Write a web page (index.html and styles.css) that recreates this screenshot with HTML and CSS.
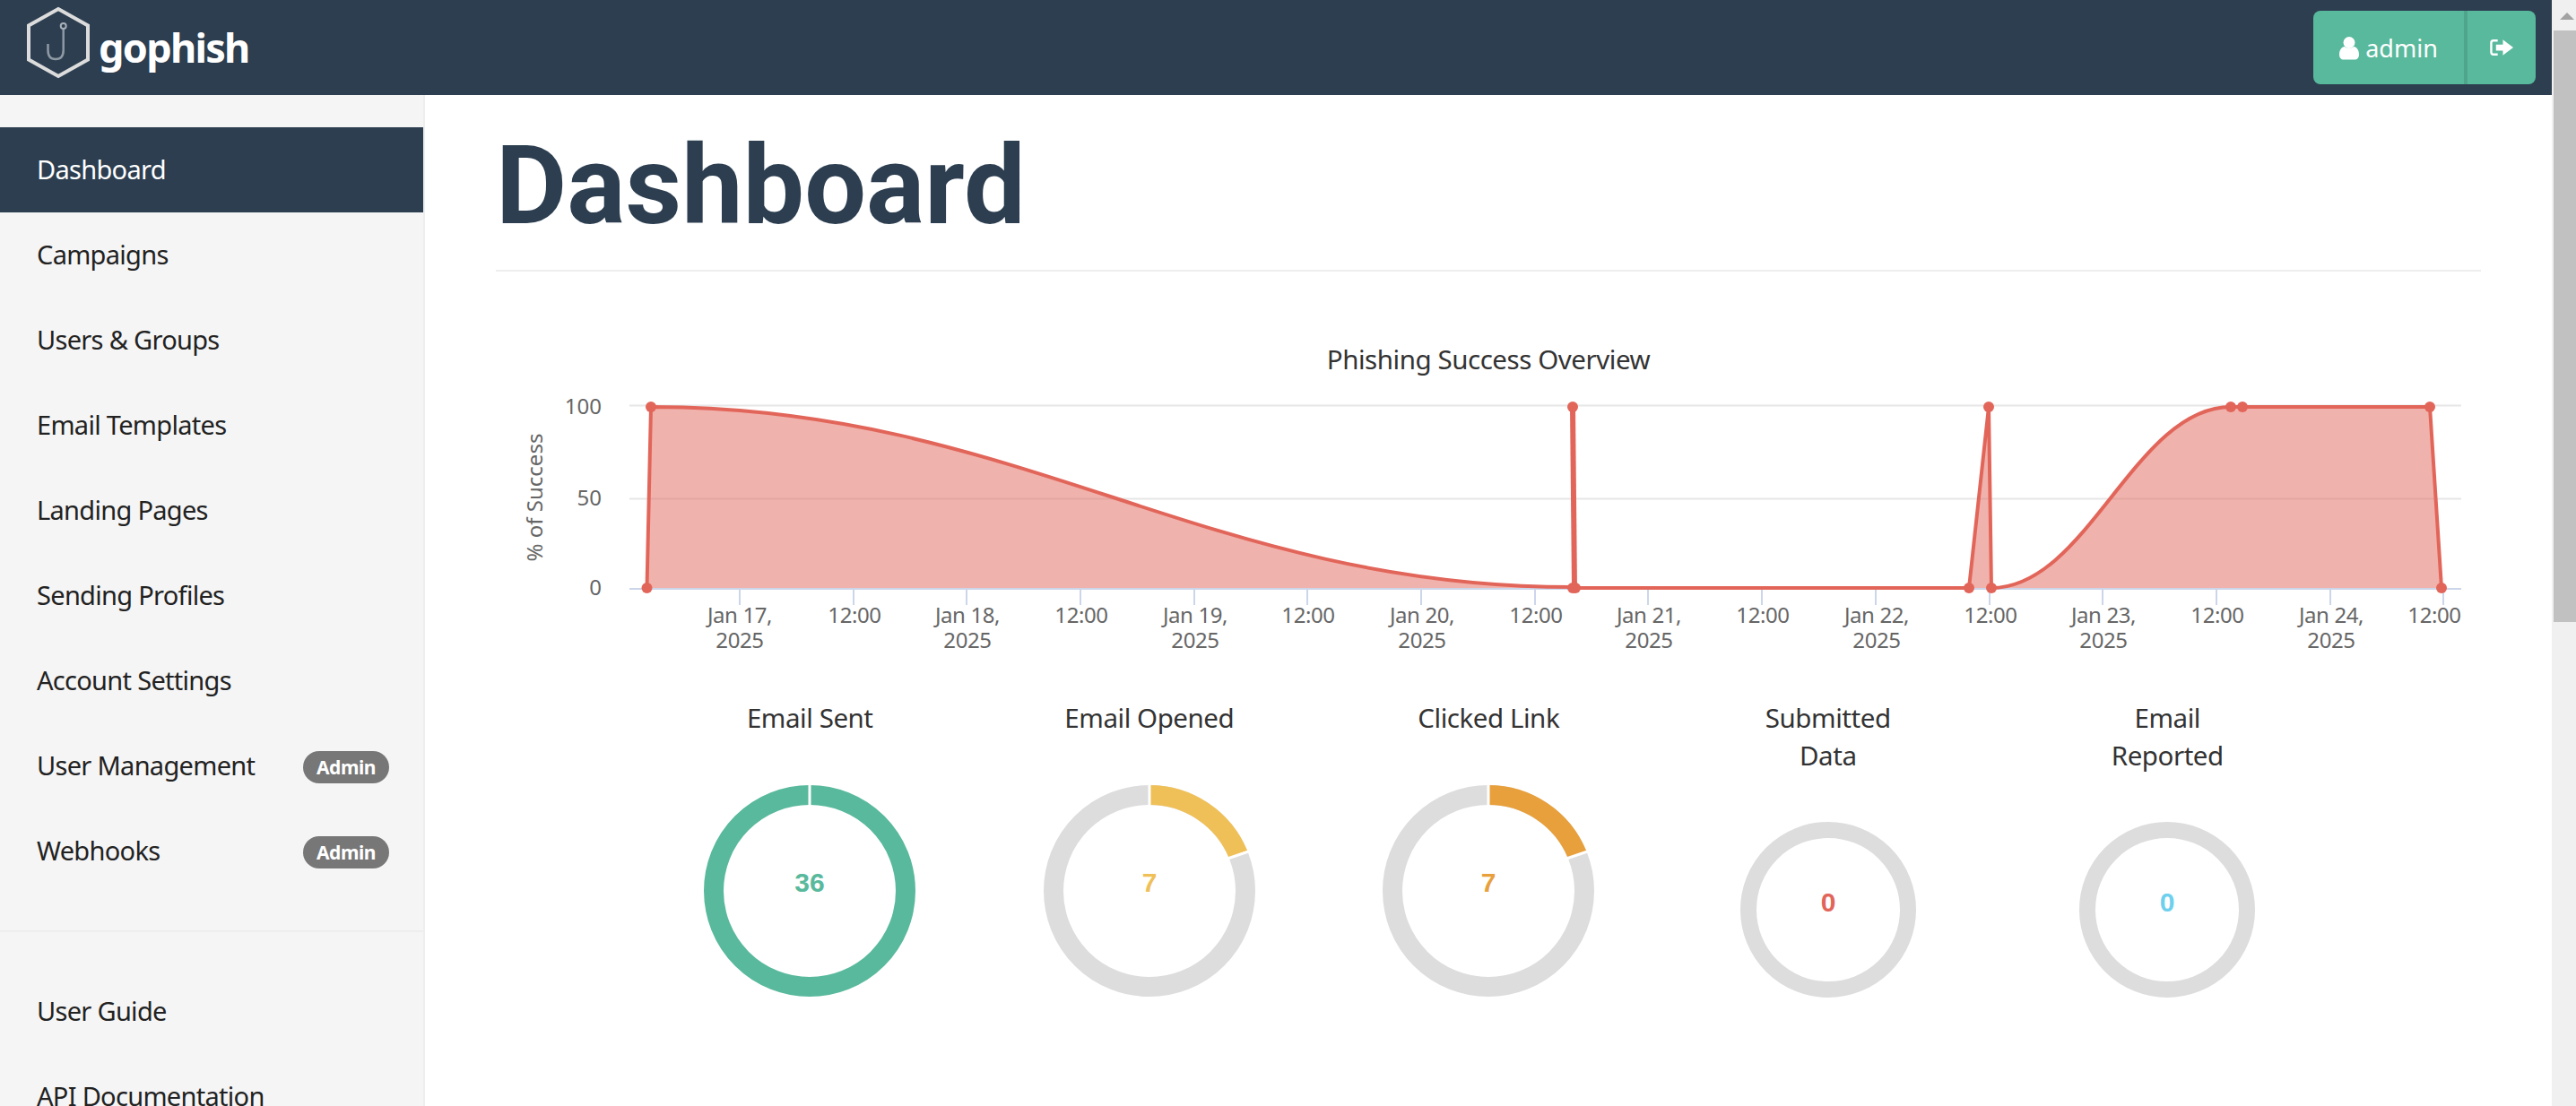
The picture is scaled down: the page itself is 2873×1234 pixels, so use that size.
FILE: index.html
```html
<!DOCTYPE html>
<html lang="en">
<head>
    <meta charset="UTF-8">
    <title>Dashboard - Gophish</title>
    <link rel="stylesheet" href="styles.css">
</head>
<body>
    <div class="page">
        <header class="navbar">
            <a class="brand">
                <svg class="brand-logo" viewBox="28 6 74 84">
                    <polygon class="logo-hex" points="65,10 98,28.500 98,66.500 65,85 32,66.500 32,28.500"/>
                    <path class="logo-hook" d="M70.700 32V56C70.700 63 67 66 62 66C57 66 53.500 63 53.500 56V49"/>
                    <circle class="logo-eye" cx="70.700" cy="29" r="3"/>
                </svg>
                <span class="brand-name">gophish</span>
            </a>
            <div class="user-btns">
                <a class="user-btn user-name">
                    <svg class="icon-user" viewBox="0 0 22 26"><circle cx="11" cy="7" r="6.5"/><path d="M0 20C0 14 4 11.500 6 11.500C8 13.500 14 13.500 16 11.500C18 11.500 22 14 22 20C22 24 20 26 17 26H5C2 26 0 24 0 20Z"/></svg>
                    admin
                </a>
                <a class="user-btn user-logout">
                    <svg class="icon-out" viewBox="0 0 28 20"><path class="out-door" d="M9 2H4C2.500 2 1.500 3 1.500 4.500V15.500C1.500 17 2.500 18 4 18H9"/><path d="M7 6.500H15V1L27 10L15 19V13.500H7Z"/></svg>
                </a>
            </div>
        </header>

        <div class="main">
            <nav class="sidebar">
                <ul class="nav-list">
                    <li class="nav-item active">Dashboard</li>
                    <li class="nav-item">Campaigns</li>
                    <li class="nav-item">Users &amp; Groups</li>
                    <li class="nav-item">Email Templates</li>
                    <li class="nav-item">Landing Pages</li>
                    <li class="nav-item">Sending Profiles</li>
                    <li class="nav-item">Account Settings</li>
                    <li class="nav-item">User Management <span class="badge">Admin</span></li>
                    <li class="nav-item">Webhooks <span class="badge">Admin</span></li>
                </ul>
                <ul class="nav-list nav-help">
                    <li class="nav-item">User Guide</li>
                    <li class="nav-item">API Documentation</li>
                </ul>
            </nav>

            <main class="content">
                <h1 class="page-title">Dashboard</h1>

                <section class="overview">
                    <svg class="overview-chart" viewBox="553 360 2214 390">
                        <text class="chart-title" x="1660" y="412">Phishing Success Overview</text>

                        <line class="grid" x1="702" y1="452.500" x2="2745" y2="452.500"/>
                        <line class="grid" x1="702" y1="556.500" x2="2745" y2="556.500"/>

                        <path class="series-fill" d="M721.500 656L726 454C1137 454 1343 655 1754 655L1756 656H2196L2218 454L2221 656C2328 656 2381 454 2488 454H2710L2723 656Z"/>
                        <line class="axis" x1="702" y1="657" x2="2745" y2="657"/>
                        <path class="axis" d="M825 657V675M952 657V675M1078 657V675M1205 657V675M1332 657V675M1458 657V675M1585 657V675M1712 657V675M1838 657V675M1965 657V675M2092 657V675M2219 657V675M2345 657V675M2472 657V675M2599 657V675M2725 657V675"/>
                        <path class="series-line" d="M721.500 656L726 454C1137 454 1343 655 1754 655L1756 656H2196L2218 454L2221 656C2328 656 2381 454 2488 454H2710L2723 656"/>
                        <path class="series-line spike" d="M1754 454L1756 656"/>

                        <g class="points">
                            <circle cx="721.500" cy="656" r="6"/><circle cx="726" cy="454" r="6"/>
                            <circle cx="1754" cy="454" r="6"/><circle cx="1754" cy="656" r="6"/><circle cx="1757" cy="656" r="6"/>
                            <circle cx="2196" cy="656" r="6"/><circle cx="2218" cy="454" r="6"/><circle cx="2221" cy="656" r="6"/>
                            <circle cx="2488" cy="454" r="6"/><circle cx="2501" cy="454" r="6"/>
                            <circle cx="2710" cy="454" r="6"/><circle cx="2723" cy="656" r="6"/>
                        </g>

                        <g class="tick-y">
                            <text x="671" y="462">100</text>
                            <text x="671" y="564">50</text>
                            <text x="671" y="664">0</text>
                        </g>
                        <text class="axis-title" transform="translate(605 555) rotate(-90)">% of Success</text>

                        <g class="tick-x">
                            <text x="825" y="695">Jan 17,</text><text x="825" y="723">2025</text>
                            <text x="953" y="695">12:00</text>
                            <text x="1079" y="695">Jan 18,</text><text x="1079" y="723">2025</text>
                            <text x="1206" y="695">12:00</text>
                            <text x="1333" y="695">Jan 19,</text><text x="1333" y="723">2025</text>
                            <text x="1459" y="695">12:00</text>
                            <text x="1586" y="695">Jan 20,</text><text x="1586" y="723">2025</text>
                            <text x="1713" y="695">12:00</text>
                            <text x="1839" y="695">Jan 21,</text><text x="1839" y="723">2025</text>
                            <text x="1966" y="695">12:00</text>
                            <text x="2093" y="695">Jan 22,</text><text x="2093" y="723">2025</text>
                            <text x="2220" y="695">12:00</text>
                            <text x="2346" y="695">Jan 23,</text><text x="2346" y="723">2025</text>
                            <text x="2473" y="695">12:00</text>
                            <text x="2600" y="695">Jan 24,</text><text x="2600" y="723">2025</text>
                            <text x="2715" y="695">12:00</text>
                        </g>
                    </svg>

                    <div class="stats">
                        <div class="stat">
                            <div class="stat-title">Email Sent</div>
                            <svg class="donut" viewBox="0 0 240 240">
                                <circle class="ring ring-sent" cx="120" cy="120" r="107"/>
                                <line class="seam" x1="120" y1="2" x2="120" y2="26"/>
                                <text class="donut-value val-sent" x="120" y="120.500">36</text>
                            </svg>
                        </div>
                        <div class="stat">
                            <div class="stat-title">Email Opened</div>
                            <svg class="donut" viewBox="0 0 240 240">
                                <circle class="ring" cx="120" cy="120" r="107"/>
                                <circle class="ring seg seg-opened" cx="120" cy="120" r="107" pathLength="360" transform="rotate(-90 120 120)"/>
                                <line class="seam" x1="120" y1="2" x2="120" y2="26"/>
                                <line class="seam" x1="207" y1="84" x2="232" y2="75.500"/>
                                <text class="donut-value val-opened" x="120" y="120.500">7</text>
                            </svg>
                        </div>
                        <div class="stat">
                            <div class="stat-title">Clicked Link</div>
                            <svg class="donut" viewBox="0 0 240 240">
                                <circle class="ring" cx="120" cy="120" r="107"/>
                                <circle class="ring seg seg-clicked" cx="120" cy="120" r="107" pathLength="360" transform="rotate(-90 120 120)"/>
                                <line class="seam" x1="120" y1="2" x2="120" y2="26"/>
                                <line class="seam" x1="207" y1="84" x2="232" y2="75.500"/>
                                <text class="donut-value val-clicked" x="120" y="120.500">7</text>
                            </svg>
                        </div>
                        <div class="stat">
                            <div class="stat-title">Submitted<br>Data</div>
                            <svg class="donut donut-small" viewBox="0 0 200 200">
                                <circle class="ring ring-small" cx="100" cy="100" r="89"/>
                                <text class="donut-value val-submitted" x="100" y="101.500">0</text>
                            </svg>
                        </div>
                        <div class="stat">
                            <div class="stat-title">Email<br>Reported</div>
                            <svg class="donut donut-small" viewBox="0 0 200 200">
                                <circle class="ring ring-small" cx="100" cy="100" r="89"/>
                                <text class="donut-value val-reported" x="100" y="101.500">0</text>
                            </svg>
                        </div>
                    </div>
                </section>
            </main>
        </div>
    </div>

    <div class="scrollbar">
        <div class="scroll-btn"><span class="scroll-arrow"></span></div>
        <div class="scroll-thumb"></div>
    </div>
</body>
</html>
```

FILE: styles.css
```css
html, body {
    margin: 0;
    height: 100%;
    overflow: hidden;
}
body {
    display: flex;
    font-family: "Noto Sans", sans-serif;
    color: #333;
    background: #fff;
}
ul {
    list-style: none;
    margin: 0;
    padding: 0;
}

.page {
    flex: 1;
    min-width: 0;
    height: 1234px;
    overflow: hidden;
}

/* top bar */
.navbar {
    height: 106px;
    background: #2c3e50;
    display: flex;
    justify-content: space-between;
    align-items: flex-start;
    padding: 0 18px 0 28px;
}
.brand {
    display: flex;
    align-items: flex-start;
    margin-top: 6px;
}
.brand-logo {
    width: 74px;
    height: 84px;
}
.logo-hex {
    fill: none;
    stroke: #dcdcdc;
    stroke-width: 4;
}
.logo-hook {
    fill: none;
    stroke: #8e99a4;
    stroke-width: 2.500;
}
.logo-eye {
    fill: none;
    stroke: #a8b0b8;
    stroke-width: 2;
}
.brand-name {
    color: #fff;
    font-weight: 700;
    font-size: 45px;
    line-height: 60px;
    margin: 17px 0 0 8px;
    letter-spacing: -1.700px;
}
.user-btns {
    display: flex;
    margin-top: 12px;
    height: 82px;
    border-radius: 8px;
    overflow: hidden;
    color: #fff;
}
.user-btn {
    background: #59b99c;
    display: flex;
    align-items: center;
    justify-content: center;
    font-size: 27px;
}
.user-name {
    width: 168px;
    gap: 7px;
    border-right: 4px solid #4fa58b;
}
.user-logout {
    width: 76px;
}
.icon-user {
    width: 22px;
    height: 27px;
    fill: #fff;
}
.icon-out {
    width: 27px;
    height: 20px;
    fill: #fff;
}
.out-door {
    fill: none;
    stroke: #fff;
    stroke-width: 2.500;
}

.main {
    display: flex;
    height: 1128px;
}

/* left menu */
.sidebar {
    width: 472px;
    flex: none;
    background: #f5f5f5;
    border-right: 2px solid #eee;
    padding-top: 36px;
}
.nav-item {
    height: 95px;
    display: flex;
    align-items: center;
    justify-content: space-between;
    padding: 0 38px 3px 41px;
    box-sizing: border-box;
    font-size: 29px;
    color: #222;
    letter-spacing: -0.700px;
}
.nav-item.active {
    background: #2c3e50;
    color: #fff;
}
.badge {
    width: 96px;
    height: 36px;
    margin-top: 6px;
    border-radius: 18px;
    background: #777;
    color: #fff;
    font-size: 21px;
    font-weight: 700;
    display: flex;
    align-items: center;
    justify-content: center;
    letter-spacing: -0.400px;
}
.nav-help {
    margin-top: 41px;
    border-top: 2px solid #eee;
    padding-top: 41px;
}

/* dashboard */
.content {
    flex: 1;
    min-width: 0;
    padding: 0 79px;
}
.page-title {
    margin: 0;
    height: 197px;
    box-sizing: border-box;
    padding-top: 22px;
    font-family: Roboto, sans-serif;
    font-weight: 700;
    font-size: 122px;
    line-height: 160px;
    color: #2c3e50;
    border-bottom: 2px solid #eee;
}
.overview-chart {
    display: block;
    width: 2214px;
    height: 390px;
    margin-top: 57px;
}
.chart-title {
    font-size: 29.500px;
    fill: #333;
    text-anchor: middle;
    letter-spacing: -0.450px;
}
.grid {
    stroke: #e6e6e6;
    stroke-width: 2;
}
.axis {
    stroke: #ccd6eb;
    stroke-width: 2;
    fill: none;
}
.series-fill {
    fill: rgba(226, 101, 90, 0.5);
}
.series-line {
    fill: none;
    stroke: #e2655a;
    stroke-width: 4;
}
.spike {
    stroke-width: 6;
}
.points circle {
    fill: #e2655a;
}
.tick-y text {
    font-size: 24px;
    fill: #666;
    text-anchor: end;
}
.tick-x text {
    font-size: 24px;
    fill: #666;
    text-anchor: middle;
    letter-spacing: -0.400px;
}
.axis-title {
    font-size: 24px;
    fill: #666;
    text-anchor: middle;
}

.stats {
    display: flex;
    margin-top: 30px;
    padding-left: 161px;
}
.stat {
    width: 378.500px;
    text-align: center;
}
.stat-title {
    font-size: 29.500px;
    line-height: 42px;
    height: 94px;
    color: #333;
    letter-spacing: -0.450px;
}
.donut {
    display: block;
    width: 240px;
    height: 240px;
    margin: 0 auto;
}
.donut-small {
    width: 200px;
    height: 200px;
    margin-top: 41px;
}
.ring {
    fill: none;
    stroke: #ddd;
    stroke-width: 22;
}
.ring-small {
    stroke-width: 18;
}
.ring-sent {
    stroke: #59b99c;
}
.seg-opened {
    stroke: #f0c058;
    stroke-dasharray: 68 292;
}
.seg-clicked {
    stroke: #e8a03c;
    stroke-dasharray: 68 292;
}
.seam {
    stroke: #fff;
    stroke-width: 3;
}
.donut-value {
    font-family: "Liberation Sans", Arial, sans-serif;
    font-weight: 700;
    font-size: 30px;
    text-anchor: middle;
}
.val-sent { fill: #59b99c; }
.val-opened { fill: #f0c058; }
.val-clicked { fill: #e8a03c; }
.val-submitted { fill: #e2655a; }
.val-reported { fill: #6dd0ee; }

/* drawn page scrollbar, the window capture has one */
.scrollbar {
    width: 27px;
    flex: none;
    height: 1234px;
    background: #f0f0f0;
}
.scroll-btn {
    height: 33px;
    padding: 1px 0 0 7px;
    display: flex;
    align-items: center;
    justify-content: center;
}
.scroll-arrow {
    border-left: 8px solid transparent;
    border-right: 8px solid transparent;
    border-bottom: 8px solid #a3a3a3;
}
.scroll-thumb {
    height: 660px;
    margin-left: 2px;
    background: #c1c1c1;
}
```
